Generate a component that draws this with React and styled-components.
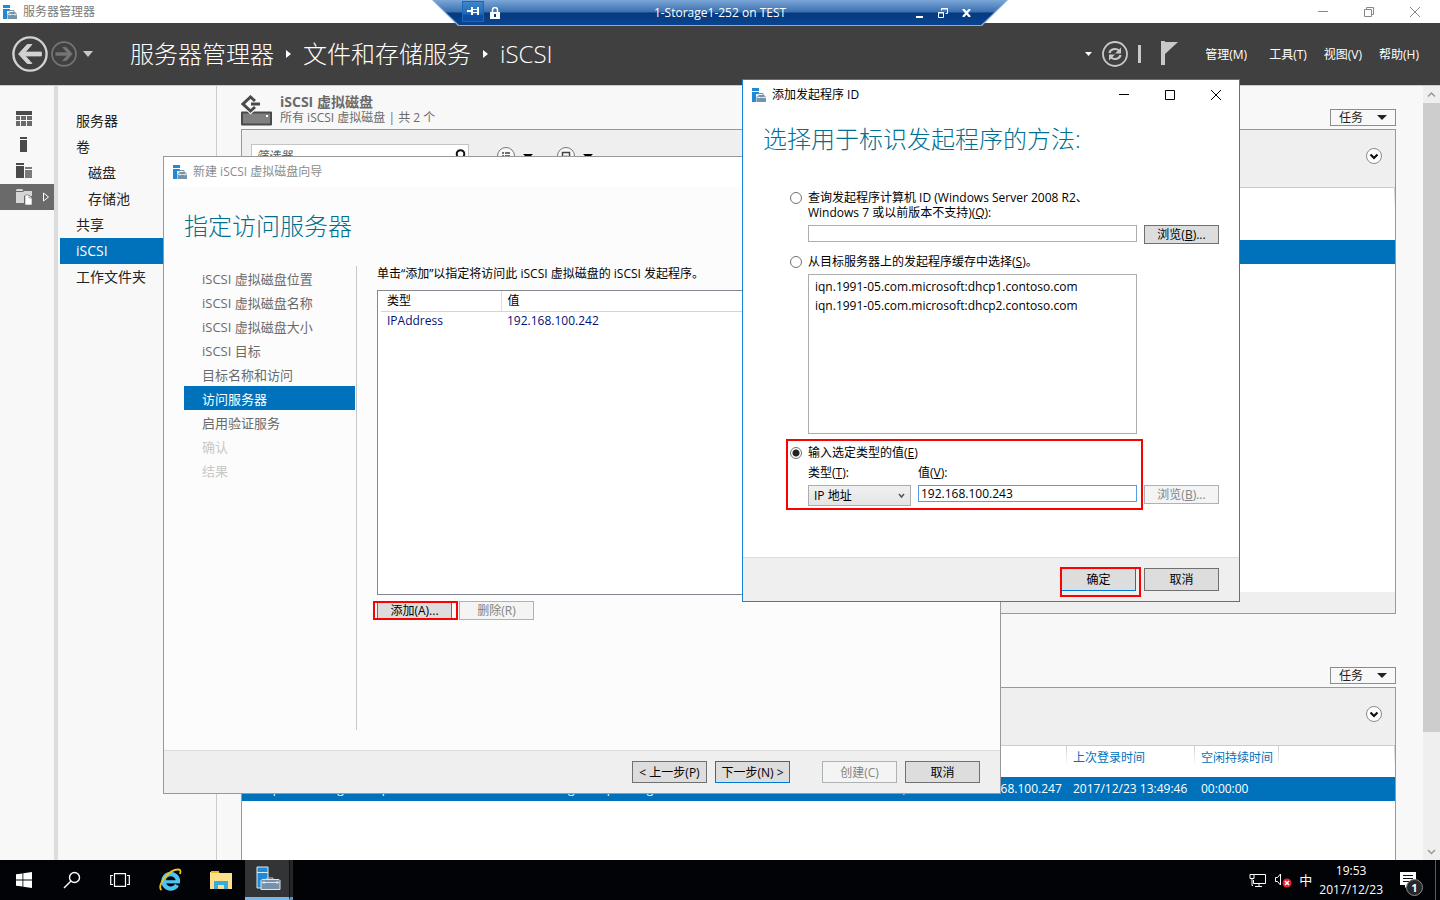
import React from "react";
import styled, { createGlobalStyle } from "styled-components";

const GlobalStyle = createGlobalStyle`
  *, *::before, *::after {
    box-sizing: border-box;
  }
  body {
    margin: 0;
    background: #000;
    font-family: "Open Sans", "Noto Sans CJK SC", sans-serif;
    font-size: 12px;
    line-height: 16px;
    color: #000;
  }
  button, input, select {
    font: inherit;
    color: inherit;
    margin: 0;
  }
  ul, h1, h2, p {
    margin: 0;
    padding: 0;
    list-style: none;
    font-weight: normal;
  }
  a {
    color: inherit;
    text-decoration: none;
  }
  svg {
    display: block;
    flex: none;
  }
`;

const Desktop = styled.div`
  position: relative;
  height: 100vh;
  overflow: hidden;
  display: flex;
  flex-direction: column;
`;

/* ---- server manager window ---- */

const Manager = styled.div`
  flex: 1;
  min-height: 0;
  display: flex;
  flex-direction: column;
  background: #f8f8f8;
`;
const ManagerTitle = styled.div`
  height: 23px;
  display: flex;
  align-items: center;
  gap: 6px;
  padding: 0 19px 0 3px;
  background: #fff;
  color: #7a7a7a;
`;
const Spacer = styled.div`
  flex: 1;
`;
const WindowButtons = styled.div`
  display: flex;
  gap: 34px;
`;
const PlainButton = styled.button`
  display: flex;
  align-items: center;
  justify-content: center;
  padding: 0;
  border: none;
  background: none;
`;
const Header = styled.div`
  height: 62px;
  display: flex;
  align-items: center;
  padding: 0 21px 0 12px;
  background: #404040;
  color: #fff;
`;
const History = styled.div`
  display: flex;
  gap: 3px;
  button:last-child {
    margin-left: 3px;
  }
`;
const Crumbs = styled.nav`
  display: flex;
  align-items: center;
  gap: 11px;
  margin-left: 37px;
  font-size: 24px;
  font-weight: 300;
  line-height: 32px;
`;
const HeaderTools = styled.div`
  display: flex;
  align-items: center;
  gap: 10px;
  margin-right: 26px;
`;
const Menu = styled.nav`
  display: flex;
  gap: 17px;
  padding-top: 2px;
`;
const MenuButton = styled(PlainButton)`
  &:first-child {
    margin-right: 5px;
  }
`;
const ManagerBody = styled.div`
  flex: 1;
  min-height: 0;
  display: flex;
  border-top: 1px solid #ccc;
`;
const Rail = styled.div`
  width: 58px;
  padding-top: 20px;
  border-right: 4px solid #dcdcdc;
`;
const RailButton = styled(PlainButton)`
  width: 100%;
  height: 26px;
  justify-content: flex-start;
  gap: 10px;
  padding-left: 16px;
  background: ${(props) => (props.$active ? "#6a6a6a" : "none")};
`;
const Side = styled.ul`
  width: 159px;
  padding: 22px 0 0 2px;
  border-right: 1px solid #ccc;
  font-size: 14px;
`;
const SideLink = styled.a`
  display: block;
  line-height: 26px;
  padding-left: ${(props) => (props.$nested ? 28 : 16)}px;
  color: ${(props) => (props.$active ? "#fff" : "#222")};
  background: ${(props) => (props.$active ? "#0072bc" : "none")};
`;
const Content = styled.main`
  flex: 1;
  min-width: 0;
  display: flex;
  flex-direction: column;
  padding: 8px 27px 0 24px;
`;
const SectionHead = styled.div`
  display: flex;
  align-items: flex-end;
  gap: 8px;
  height: 35px;
  padding-bottom: 3px;
  color: #6a6a6a;
`;
const SectionTitle = styled.h2`
  font-size: 14px;
  font-weight: bold;
  line-height: 17px;
`;
const TasksButton = styled(PlainButton)`
  width: 66px;
  height: 17px;
  gap: 14px;
  border: 1px solid #8c8c8c;
  color: #222;
  line-height: 15px;
`;
const Panel = styled.section`
  display: flex;
  flex-direction: column;
  height: ${(props) => (props.$open ? "auto" : "485px")};
  flex: ${(props) => (props.$open ? "1" : "none")};
  min-height: 0;
  margin-bottom: ${(props) => (props.$open ? 0 : 38)}px;
  border: 1px solid #999;
  border-bottom-width: ${(props) => (props.$open ? 0 : 1)}px;
  background: #fff;
`;
const PanelTools = styled.div`
  display: flex;
  align-items: center;
  height: 58px;
  flex: none;
  padding: 0 13px 5px 9px;
  background: #efefef;
  border-bottom: 1px solid #ccc;
`;
const Filter = styled.label`
  display: flex;
  align-items: center;
  width: 218px;
  height: 24px;
  margin-right: 28px;
  padding: 0 2px 0 4px;
  background: #fff;
  border: 1px solid #c4c4c4;
`;
const FilterInput = styled.input`
  flex: 1;
  min-width: 0;
  padding: 0;
  border: none;
  outline: none;
  background: none;
  &::placeholder {
    color: #555;
    font-style: italic;
    opacity: 1;
  }
`;
const ToolGroup = styled.div`
  display: flex;
  align-items: center;
  gap: 8px;
  margin-right: 24px;
`;
const PanelFoot = styled.div`
  height: 21px;
  margin-top: auto;
  background: #efefef;
`;
const Grid = styled.table`
  width: 100%;
  table-layout: fixed;
  border-collapse: collapse;
  th,
  td {
    padding: 0 0 0 6px;
    text-align: left;
    font-weight: normal;
    white-space: nowrap;
    overflow: hidden;
  }
  th {
    height: 31px;
    padding-bottom: 8px;
    color: #0072bc;
    background: linear-gradient(#ccc, #fff 20px) right top / 1px 20px no-repeat;
  }
  td {
    height: 24px;
  }
`;
const GroupRow = styled.tr`
  td {
    height: 21px;
  }
`;
const PickedRow = styled.tr`
  background: #0072bc;
  color: #fff;
`;
const ScrollTrack = styled.div`
  width: 17px;
  display: flex;
  flex-direction: column;
  background: #efefef;
`;
const ScrollThumb = styled.div`
  flex: 1;
  margin-bottom: 111px;
  background: #cdcdcd;
`;

/* ---- remote session bar ---- */

const SessionBar = styled.div`
  position: absolute;
  top: 0;
  left: 50%;
  width: 576px;
  height: 26px;
  margin-left: -288px;
  background: #86aedb;
  clip-path: polygon(0 0, 100% 0, 550px 100%, 26px 100%);
`;
const SessionFill = styled.div`
  display: grid;
  grid-template-columns: 1fr auto 1fr;
  align-items: center;
  height: 25px;
  padding: 0 30px;
  color: #fff;
  background: linear-gradient(#7ba6d6, #3a70b0 12px, #06397f 13px, #0a4490);
  clip-path: polygon(1px 0, 575px 0, 549px 100%, 27px 100%);
`;
const SessionTools = styled.div`
  display: flex;
  align-items: center;
  justify-content: ${(props) => (props.$end ? "flex-end" : "flex-start")};
  gap: ${(props) => (props.$end ? 14 : 6)}px;
  padding-right: ${(props) => (props.$end ? 7 : 0)}px;
`;
const PinButton = styled(PlainButton)`
  width: 22px;
  height: 21px;
  margin-bottom: 3px;
  background: linear-gradient(#3f86c8, #2468b4 12px, #0a4fa5 13px);
  border: 1px solid #1868bd;
`;

/* ---- dialogs ---- */

const Dialog = styled.section`
  position: absolute;
  display: flex;
  flex-direction: column;
`;
const WizardFrame = styled(Dialog)`
  left: 163px;
  top: 156px;
  width: 838px;
  height: 638px;
  background: #fcfcfc;
  border: 1px solid #999;
`;
const InitiatorFrame = styled(Dialog)`
  left: 742px;
  top: 79px;
  width: 498px;
  height: 523px;
  background: #fff;
  border: 1px solid #1883d7;
`;
const DialogTitle = styled.div`
  display: flex;
  align-items: center;
  gap: 6px;
  height: 30px;
  flex: none;
  padding: 0 17px 0 9px;
  background: #fff;
  color: ${(props) => (props.$muted ? "#8c8c8c" : "#000")};
`;
const DialogHeading = styled.h1`
  padding: ${(props) => props.$top}px 20px 0;
  font-size: 24px;
  font-weight: 300;
  line-height: 32px;
  color: #00708f;
`;
const WizardBody = styled.div`
  flex: 1;
  display: flex;
  padding: 24px 20px 20px;
`;
const Steps = styled.ul`
  width: 173px;
  padding-right: 1px;
  border-right: 1px solid #c8c8c8;
  font-size: 13px;
`;
const Step = styled.li`
  line-height: 22px;
  padding: 2px 0 0 18px;
  color: ${(props) =>
    props.$active ? "#fff" : props.$disabled ? "#c8c8c8" : "#6a6a6a"};
  background: ${(props) => (props.$active ? "#0072bc" : "none")};
`;
const WizardMain = styled.div`
  flex: 1;
  display: flex;
  flex-direction: column;
  padding-left: 20px;
`;
const ListBox = styled.div`
  height: 305px;
  margin: 8px 0 6px;
  padding: 0 3px;
  background: #fff;
  border: 1px solid #828790;
`;
const ServerTable = styled.table`
  width: 100%;
  table-layout: fixed;
  border-collapse: collapse;
  th,
  td {
    height: 20px;
    padding: 0 6px;
    text-align: left;
    font-weight: normal;
  }
  th {
    padding: 2px 6px 1px;
    border-bottom: 1px solid #d5d5d5;
  }
  th:first-child {
    width: 120px;
    border-right: 1px solid #dedede;
  }
  td {
    color: #00127a;
  }
`;
const ButtonRow = styled.div`
  display: flex;
  gap: 7px;
`;
const DialogFoot = styled.div`
  display: flex;
  justify-content: flex-end;
  flex: none;
  gap: 8px;
  padding: 10px 20px;
  background: #efefef;
  border-top: 1px solid #dcdcdc;
`;
const FootGap = styled.span`
  width: 16px;
`;
const Button = styled.button`
  width: 75px;
  height: ${(props) => props.$height || 19}px;
  padding: 0;
  white-space: nowrap;
  line-height: 15px;
  background: #ddd;
  border: 1px solid ${(props) => (props.$primary ? "#0078d7" : "#707070")};
  &:disabled {
    color: #838383;
    background: #f4f4f4;
    border-color: #adb2b5;
  }
`;
const Marked = styled.div`
  position: relative;
`;
const Mark = styled.span`
  position: absolute;
  inset: ${(props) => props.$inset};
  border: 2px solid #f00;
  pointer-events: none;
`;
const Form = styled.form`
  flex: 1;
  display: grid;
  grid-template-columns: 11px 329px 75px;
  column-gap: 7px;
  align-content: start;
  padding: 35px 20px 0 47px;
`;
const Option = styled.label`
  grid-column: 2 / -1;
  line-height: 15px;
  white-space: nowrap;
  padding-bottom: ${(props) => props.$gap || 0}px;
`;
const Radio = styled.input`
  appearance: none;
  width: 12px;
  height: 12px;
  margin: 2px 0 0;
  border: 1px solid #707070;
  border-radius: 50%;
  background: #fff;
  &:checked {
    background: radial-gradient(circle, #222 3px, #fff 4px);
  }
`;
const Field = styled.input`
  grid-column: ${(props) => (props.$wide ? "2" : "auto")};
  width: 100%;
  height: 17px;
  padding: 0 2px;
  outline: none;
  border: 1px solid ${(props) => (props.$focused ? "#569de5" : "#abadb3")};
  background: #fff;
`;
const BrowseButton = styled(Button)`
  margin-bottom: 10px;
`;
const CacheList = styled.ul`
  grid-column: 2 / 3;
  height: 160px;
  margin-bottom: 5px;
  padding: 2px 6px;
  border: 1px solid #abadb3;
  line-height: 19px;
`;
const ValueGroup = styled(Marked)`
  grid-column: 1 / 3;
  display: grid;
  grid-template-columns: 11px 103px 1fr;
  column-gap: 7px;
  padding-top: 6px;
`;
const ValueLabel = styled.label`
  grid-column: ${(props) => props.$col};
  line-height: 15px;
  padding: 5px 0;
`;
const TypeSelect = styled.select`
  height: 21px;
  padding: 0 5px;
  appearance: none;
  border: 1px solid #acacac;
  border-radius: 0;
  background: linear-gradient(#f0f0f0, #e5e5e5);
`;
const SelectWrap = styled.div`
  grid-column: 2;
  display: grid;
  svg {
    grid-area: 1 / 1;
    place-self: center end;
    margin-right: 6px;
    pointer-events: none;
  }
  select {
    grid-area: 1 / 1;
  }
`;
const BottomButton = styled(Button)`
  align-self: end;
  margin-bottom: 2px;
`;

/* ---- taskbar ---- */

const Taskbar = styled.footer`
  height: 40px;
  display: flex;
  align-items: stretch;
  background: #010306;
  color: #fff;
`;
const TaskButton = styled(PlainButton)`
  width: ${(props) => props.$width || 48}px;
`;
const ActiveTask = styled(TaskButton)`
  padding: 0 0 0 3px;
  background: #333436;
  border-bottom: 3px solid #76b9ed;
`;
const TaskStack = styled.span`
  width: 4px;
  background: #252628;
  border-left: 1px solid #111;
  border-bottom: 3px solid #5e93bd;
`;
const Tray = styled.div`
  display: flex;
  align-items: center;
  gap: 7px;
  margin-left: auto;
`;
const Ime = styled.span`
  font-size: 13px;
`;
const Clock = styled.time`
  text-align: center;
  line-height: 19px;
  margin-right: 10px;
`;
const Notices = styled.div`
  position: relative;
  width: 28px;
`;
const Badge = styled.span`
  position: absolute;
  left: 6px;
  top: 7px;
  width: 17px;
  height: 17px;
  border: 1px solid #8a8a8a;
  border-radius: 50%;
  background: #26282b;
  font-size: 11px;
  font-weight: bold;
  line-height: 15px;
  text-align: center;
`;
const PeekEdge = styled.span`
  width: 5px;
  align-self: stretch;
  border-left: 1px solid #5a5a5a;
`;

const ServerIcon = () => (
  <svg width="14" height="14" viewBox="0 0 14 14">
    <path d="M0 0h7v3H0zM0 4h7v2H4v8H0z" fill="#1f8bd8" />
    <path d="M6 6.500V5.500h5v2" fill="none" stroke="#7293aa" />
    <path d="M4.500 9L7 7h5l2 2v5H4.500z" fill="#7293aa" />
    <path d="M5 9.500h9M7 8.500v2M12 8.500v2" stroke="#e8eff3" strokeWidth=".8" />
  </svg>
);

const BigServerIcon = () => (
  <svg width="25" height="25" viewBox="0 0 25 25">
    <path d="M1 1h11v21H1z" fill="#1f8bd8" stroke="#d8ecfa" />
    <path d="M1 6.500h11" stroke="#d8ecfa" />
    <path d="M11 14v-2h6v2" fill="none" stroke="#b9cad8" />
    <path d="M5 14.500l1-1h17l1 1v9H5z" fill="#7891aa" stroke="#dbe5ed" />
    <path d="M6 16.500h17M8 15v3M21 15v3" stroke="#dbe5ed" />
  </svg>
);

const Triangle = ({ w = 10, h = 5, color = "#222" }) => (
  <svg width={w} height={h} viewBox="0 0 10 5" preserveAspectRatio="none">
    <path d="M0 0h10L5 5z" fill={color} />
  </svg>
);

const CrumbArrow = () => (
  <svg width="7" height="8" viewBox="0 0 7 8">
    <path d="M1 0l5 4-5 4z" fill="#fff" />
  </svg>
);

const RoundArrow = ({ r, color, flip }) => (
  <svg width={r * 2} height={r * 2} viewBox="0 0 38 38">
    <circle cx="19" cy="19" r="17.500" fill="none" stroke={color} strokeWidth="2.500" />
    <path
      d="M31 17v4H14l7 8h-5l-9-10 9-10h5l-7 8z"
      fill={color}
      stroke={color}
      transform={flip ? "rotate(180 19 19)" : undefined}
    />
  </svg>
);

const WinIcon = ({ kind, color = "#000" }) => (
  <svg width="12" height="12" viewBox="0 0 12 12" fill="none" stroke={color}>
    {kind === "min" && <path d="M1 5.500h10" />}
    {kind === "max" && <path d="M1.500 1.500h9v9h-9z" />}
    {kind === "restore" && <path d="M1.500 3.500h7v7h-7zM3.500 3.500v-2h7v7h-2" />}
    {kind === "close" && <path d="M1 1l10 10M11 1L1 11" />}
  </svg>
);

const ExpandIcon = () => (
  <svg width="16" height="16" viewBox="0 0 16 16">
    <circle cx="8" cy="8" r="7.500" fill="#fff" stroke="#8a8a8a" />
    <path d="M4.500 6.500L8 10l3.500-3.500" fill="none" stroke="#111" strokeWidth="2.200" />
  </svg>
);

const SmallChevron = ({ up }) => (
  <svg width="17" height="17" viewBox="0 0 17 17">
    <path
      d={up ? "M5 10.500l3.500-3.500 3.500 3.500" : "M5 7l3.500 3.500L12 7"}
      fill="none"
      stroke="#999"
      strokeWidth="1.500"
    />
  </svg>
);

const rail = [
  <g key="a">
    <path d="M0 0h16v4H0z" fill="#4a4a4a" />
    <path d="M0 5h4v4H0zM0 10h4v5H0zM5 5h5v4H5zM5 10h5v5H5zM11 5h5v4h-5zM11 10h5v5h-5z" fill="#6a6a6a" />
  </g>,
  <path key="b" d="M4 0h7v2H4zM4 3h7v12H4z" fill="#4a4a4a" />,
  <g key="c">
    <path d="M0 0h8v2H0zM0 3h8v12H0z" fill="#4a4a4a" />
    <path d="M9 4h7v2H9zM9 7h7v8H9z" fill="#7a7a7a" />
  </g>,
  <g key="d">
    <path d="M0 1l1-1h5l1 1v1H0zM0 3h7l1-1h8v5H8v7H0z" fill="#d6d6d6" />
    <path d="M9 6h4l3 3v7H9z" fill="#fff" stroke="#6a6a6a" strokeWidth=".6" />
    <path d="M13 6v3h3" fill="none" stroke="#6a6a6a" strokeWidth=".6" />
  </g>,
];

const nav = [
  { text: "服务器" },
  { text: "卷" },
  { text: "磁盘", nested: true },
  { text: "存储池", nested: true },
  { text: "共享" },
  { text: "iSCSI", active: true },
  { text: "工作文件夹" },
];

const steps = [
  "iSCSI 虚拟磁盘位置",
  "iSCSI 虚拟磁盘名称",
  "iSCSI 虚拟磁盘大小",
  "iSCSI 目标",
  "目标名称和访问",
  "访问服务器",
  "启用验证服务",
  "确认",
  "结果",
];

const Tasks = () => (
  <TasksButton type="button">
    任务
    <Triangle />
  </TasksButton>
);

const ServerManager = () => (
  <Manager>
    <ManagerTitle>
      <ServerIcon />
      服务器管理器
      <Spacer />
      <WindowButtons>
        <PlainButton aria-label="最小化"><WinIcon kind="min" color="#888" /></PlainButton>
        <PlainButton aria-label="还原"><WinIcon kind="restore" color="#888" /></PlainButton>
        <PlainButton aria-label="关闭"><WinIcon kind="close" color="#888" /></PlainButton>
      </WindowButtons>
    </ManagerTitle>
    <Header>
      <History>
        <PlainButton aria-label="后退"><RoundArrow r={18} color="#d2d2d2" /></PlainButton>
        <PlainButton aria-label="前进"><RoundArrow r={13} color="#757575" flip /></PlainButton>
        <PlainButton aria-label="历史记录"><Triangle w={10} h={6} color="#c8c8c8" /></PlainButton>
      </History>
      <Crumbs>
        <a href="#manager">服务器管理器</a>
        <CrumbArrow />
        <a href="#storage">文件和存储服务</a>
        <CrumbArrow />
        <a href="#iscsi">iSCSI</a>
      </Crumbs>
      <Spacer />
      <HeaderTools>
        <Triangle w={7} h={4} color="#fff" />
        <PlainButton aria-label="刷新">
          <svg width="26" height="26" viewBox="0 0 26 26" fill="none" stroke="#c8c8c8">
            <circle cx="13" cy="13" r="12" strokeWidth="1.800" />
            <path d="M7.500 12c.5-3.500 6-5.500 9.500-2.500M18.500 14c-.5 3.500-6 5.500-9.500 2.500" strokeWidth="2.200" />
            <path d="M19 6.500v6h-6zM7 19.500v-6h6z" fill="#c8c8c8" stroke="none" />
          </svg>
        </PlainButton>
        <svg width="3" height="18"><path d="M0 0h3v18H0z" fill="#c8c8c8" /></svg>
        <PlainButton aria-label="通知">
          <svg width="28" height="28" viewBox="0 0 28 28">
            <path d="M10 1h4v24h-4zM14 2h13L14 14z" fill="#c8c8c8" />
          </svg>
        </PlainButton>
      </HeaderTools>
      <Menu>
        <MenuButton>管理(M)</MenuButton>
        <MenuButton>工具(T)</MenuButton>
        <MenuButton>视图(V)</MenuButton>
        <MenuButton>帮助(H)</MenuButton>
      </Menu>
    </Header>
    <ManagerBody>
      <Rail>
        {rail.map((icon, i) => (
          <RailButton key={i} $active={i === 3} aria-label={"导航 " + (i + 1)}>
            <svg width="16" height="16" viewBox="0 0 16 16">{icon}</svg>
            {i === 3 && (
              <svg width="8" height="10" viewBox="0 0 8 10">
                <path d="M1.500 1l5 4-5 4z" fill="none" stroke="#fff" />
              </svg>
            )}
          </RailButton>
        ))}
      </Rail>
      <Side>
        {nav.map((item) => (
          <li key={item.text}>
            <SideLink href="#nav" $nested={item.nested} $active={item.active}>
              {item.text}
            </SideLink>
          </li>
        ))}
      </Side>
      <Content>
        <SectionHead>
          <svg width="31" height="31" viewBox="0 0 31 31">
            <path d="M1 17.500h29v12H1z" fill="#808080" stroke="#4a4a4a" strokeWidth="2" strokeLinejoin="round" />
            <path d="M25 20h2v2h-2z" fill="#fff" />
            <path d="M14 6l-4.500-4L2 9l7.500 7 4.500-4" fill="none" stroke="#f8f8f8" strokeWidth="5" />
            <path d="M14 6l-4.500-4L2 9l7.500 7 4.500-4M10 9h9" fill="none" stroke="#4a4a4a" strokeWidth="3" />
          </svg>
          <div>
            <SectionTitle>iSCSI 虚拟磁盘</SectionTitle>
            <p>所有 iSCSI 虚拟磁盘 | 共 2 个</p>
          </div>
          <Spacer />
          <Tasks />
        </SectionHead>
        <Panel>
          <PanelTools>
            <Filter>
              <FilterInput placeholder="筛选器" aria-label="筛选器" />
              <svg width="12" height="14" viewBox="0 0 12 14" fill="none" stroke="#111" strokeWidth="2">
                <circle cx="6.500" cy="5" r="3.800" />
                <path d="M4 8l-3 5" />
              </svg>
            </Filter>
            <ToolGroup>
              <svg width="18" height="18" viewBox="0 0 18 18">
                <circle cx="9" cy="9" r="8.500" fill="#f8f8f8" stroke="#777" />
                <path d="M5 6h2M8 6h5M5 9h2M8 9h5M5 12h2M8 12h5" stroke="#444" strokeWidth="1.500" />
              </svg>
              <Triangle color="#000" />
            </ToolGroup>
            <ToolGroup>
              <svg width="18" height="18" viewBox="0 0 18 18">
                <circle cx="9" cy="9" r="8.500" fill="#f8f8f8" stroke="#777" />
                <path d="M5.500 5.500h7v7h-7zM7 9.500h4" fill="none" stroke="#444" strokeWidth="1.500" />
              </svg>
              <Triangle color="#000" />
            </ToolGroup>
            <Spacer />
            <PlainButton aria-label="展开"><ExpandIcon /></PlainButton>
          </PanelTools>
          <Grid>
            <tbody>
              <tr><th aria-label="路径" /></tr>
              <GroupRow><td /></GroupRow>
              <PickedRow><td /></PickedRow>
            </tbody>
          </Grid>
          <PanelFoot />
        </Panel>
        <SectionHead>
          <Spacer />
          <Tasks />
        </SectionHead>
        <Panel $open>
          <PanelTools>
            <Spacer />
            <PlainButton aria-label="展开"><ExpandIcon /></PlainButton>
          </PanelTools>
          <Grid>
            <colgroup>
              <col width="228" />
              <col width="215" />
              <col width="120" />
              <col width="159" />
              <col width="103" />
              <col width="128" />
              <col width="84" />
              <col />
            </colgroup>
            <thead>
              <tr>
                <th>名称</th>
                <th>发起程序</th>
                <th>目标状态</th>
                <th>IP 地址</th>
                <th />
                <th>上次登录时间</th>
                <th>空闲持续时间</th>
                <th />
              </tr>
            </thead>
            <tbody>
              <PickedRow>
                <td>test-p-windows-g-hosts-p</td>
                <td>windows-server-g-host-p-data-g</td>
                <td>已连接</td>
                <td>192.168.100.247,</td>
                <td>192.168.100.247</td>
                <td>2017/12/23 13:49:46</td>
                <td>00:00:00</td>
                <td />
              </PickedRow>
            </tbody>
          </Grid>
        </Panel>
      </Content>
      <ScrollTrack>
        <SmallChevron up />
        <ScrollThumb />
        <SmallChevron />
      </ScrollTrack>
    </ManagerBody>
  </Manager>
);

const Session = () => (
  <SessionBar>
    <SessionFill>
      <SessionTools>
        <PinButton aria-label="固定">
          <svg width="12" height="10" viewBox="0 0 12 10" stroke="#fff" fill="none">
            <path d="M0 5h5M5 1v8" strokeWidth="2" />
            <path d="M5 3.500h6M5 6.500h6" strokeWidth="1" />
            <path d="M11 1v8" strokeWidth="2" />
          </svg>
        </PinButton>
        <svg width="10" height="12" viewBox="0 0 10 12">
          <path d="M2.500 5V3a2.500 2.500 0 015 0v2" fill="none" stroke="#fff" strokeWidth="1.500" />
          <path d="M0 5h10v7H0z" fill="#fff" />
          <path d="M4 7h2v3H4z" fill="#06397f" />
        </svg>
      </SessionTools>
      <span>1-Storage1-252 on TEST</span>
      <SessionTools $end>
        <PlainButton aria-label="最小化">
          <svg width="8" height="10"><path d="M0 8h7v2H0z" fill="#fff" /></svg>
        </PlainButton>
        <PlainButton aria-label="还原">
          <svg width="10" height="10" viewBox="0 0 10 10" fill="none" stroke="#fff">
            <path d="M.5 4.500h5v5h-5zM0 5h6M3.500 2.500v-2h6v5h-2M3 1h7" />
          </svg>
        </PlainButton>
        <PlainButton aria-label="关闭">
          <svg width="9" height="8" viewBox="0 0 9 8">
            <path d="M1 0l7 8M8 0L1 8" stroke="#fff" strokeWidth="2.200" />
          </svg>
        </PlainButton>
      </SessionTools>
    </SessionFill>
  </SessionBar>
);

const Wizard = () => (
  <WizardFrame>
    <DialogTitle $muted>
      <ServerIcon />
      新建 iSCSI 虚拟磁盘向导
    </DialogTitle>
    <DialogHeading $top={23}>指定访问服务器</DialogHeading>
    <WizardBody>
      <Steps>
        {steps.map((step, i) => (
          <Step key={step} $active={i === 5} $disabled={i > 6}>{step}</Step>
        ))}
      </Steps>
      <WizardMain>
        <p>单击“添加”以指定将访问此 iSCSI 虚拟磁盘的 iSCSI 发起程序。</p>
        <ListBox>
          <ServerTable>
            <thead>
              <tr><th>类型</th><th>值</th></tr>
            </thead>
            <tbody>
              <tr><td>IPAddress</td><td>192.168.100.242</td></tr>
            </tbody>
          </ServerTable>
        </ListBox>
        <ButtonRow>
          <Marked>
            <Button>添加(A)...</Button>
            <Mark $inset="0 -6px 0 -4px" />
          </Marked>
          <Button disabled>删除(R)</Button>
        </ButtonRow>
      </WizardMain>
    </WizardBody>
    <DialogFoot>
      <Button $height={22}>&lt; 上一步(P)</Button>
      <Button $height={22} $primary>下一步(N) &gt;</Button>
      <FootGap />
      <Button $height={22} disabled>创建(C)</Button>
      <Button $height={22}>取消</Button>
    </DialogFoot>
  </WizardFrame>
);

const InitiatorDialog = () => (
  <InitiatorFrame>
    <DialogTitle>
      <ServerIcon />
      添加发起程序 ID
      <Spacer />
      <WindowButtons>
        <PlainButton aria-label="最小化"><WinIcon kind="min" /></PlainButton>
        <PlainButton aria-label="最大化"><WinIcon kind="max" /></PlainButton>
        <PlainButton aria-label="关闭"><WinIcon kind="close" /></PlainButton>
      </WindowButtons>
    </DialogTitle>
    <DialogHeading $top={13}>选择用于标识发起程序的方法:</DialogHeading>
    <Form id="initiator">
      <Radio type="radio" name="method" id="query" />
      <Option htmlFor="query" $gap={5}>
        查询发起程序计算机 ID (Windows Server 2008 R2、
        <br />
        Windows 7 或以前版本不支持)(<u>Q</u>):
      </Option>
      <Field $wide aria-label="计算机 ID" />
      <BrowseButton type="button">浏览(<u>B</u>)...</BrowseButton>
      <Radio type="radio" name="method" id="cache" />
      <Option htmlFor="cache" $gap={5}>从目标服务器上的发起程序缓存中选择(<u>S</u>)。</Option>
      <CacheList>
        <li>iqn.1991-05.com.microsoft:dhcp1.contoso.com</li>
        <li>iqn.1991-05.com.microsoft:dhcp2.contoso.com</li>
      </CacheList>
      <ValueGroup>
        <Radio type="radio" name="method" id="value" defaultChecked />
        <Option htmlFor="value">输入选定类型的值(<u>E</u>)</Option>
        <ValueLabel $col="2" htmlFor="type">类型(<u>T</u>):</ValueLabel>
        <ValueLabel $col="3" htmlFor="ip">值(<u>V</u>):</ValueLabel>
        <SelectWrap>
          <TypeSelect id="type">
            <option>IP 地址</option>
          </TypeSelect>
          <svg width="7" height="6" viewBox="0 0 7 6">
            <path d="M1 1l2.500 3L6 1" fill="none" stroke="#555" strokeWidth="1.500" />
          </svg>
        </SelectWrap>
        <Field id="ip" defaultValue="192.168.100.243" $focused />
        <Mark $inset="0 -6px -4px -4px" />
      </ValueGroup>
      <BottomButton type="button" disabled>浏览(<u>B</u>)...</BottomButton>
    </Form>
    <DialogFoot>
      <Marked>
        <Button form="initiator" type="button" $height={23} $primary>确定</Button>
        <Mark $inset="-1px -5px -6px -1px" />
      </Marked>
      <Button $height={23}>取消</Button>
    </DialogFoot>
  </InitiatorFrame>
);

const Bar = () => (
  <Taskbar>
    <TaskButton aria-label="开始">
      <svg width="16" height="16" viewBox="0 0 16 16">
        <path d="M0 2.300L6.500 1.400v6.200H0zM7.300 1.300L16 0v7.600H7.300zM0 8.400h6.500v6.200L0 13.700zM7.300 8.400H16V16l-8.700-1.200z" fill="#fff" />
      </svg>
    </TaskButton>
    <TaskButton aria-label="搜索">
      <svg width="18" height="18" viewBox="0 0 18 18" fill="none" stroke="#fff" strokeWidth="1.400">
        <circle cx="11.500" cy="6.500" r="5" />
        <path d="M8 10l-7 7" />
      </svg>
    </TaskButton>
    <TaskButton aria-label="任务视图">
      <svg width="20" height="14" viewBox="0 0 20 14" fill="none" stroke="#fff" strokeWidth="1.200">
        <path d="M4.500 .7h11v12.600h-11zM3 2.500H.7v9H3M17 2.500h2.300v9H17" />
      </svg>
    </TaskButton>
    <TaskButton $width={52} aria-label="Internet Explorer">
      <svg width="24" height="24" viewBox="0 0 24 24" fill="none">
        <path d="M20 13.500A7.300 7.300 0 1019 17" stroke="#4fc4f2" strokeWidth="4.400" />
        <path d="M7 13.800H22" stroke="#4fc4f2" strokeWidth="3.200" />
        <path d="M3.500 22C-2 18 11 1 20.500 1.500c2 .2 2.500 1.800 1.500 4.500" stroke="#f3c11c" strokeWidth="1.800" />
      </svg>
    </TaskButton>
    <TaskButton $width={49} aria-label="文件资源管理器">
      <svg width="22" height="19" viewBox="0 0 22 19">
        <path d="M0 1h8l2 1h12v16H0z" fill="#ffe08a" />
        <path d="M1 0h8v2H1z" fill="#f0b92c" />
        <path d="M4 10h14v8h-4v-4H8v4H4z" fill="#35ace0" />
      </svg>
    </TaskButton>
    <ActiveTask $width={44} aria-label="服务器管理器">
      <BigServerIcon />
    </ActiveTask>
    <TaskStack />
    <Tray>
      <svg width="18" height="15" viewBox="0 0 18 15" fill="none" stroke="#fff">
        <path d="M5 1.500h11.500v9h-12V7M1 1.500h4v4H1zM3 5.500v7h1M10 10.500v3M6 13.500h7" />
      </svg>
      <svg width="18" height="16" viewBox="0 0 18 16">
        <path d="M1.500 5.500h2l3-3.500v11l-3-3.500h-2z" fill="none" stroke="#fff" />
        <circle cx="13" cy="11" r="4.500" fill="#e0202c" />
        <path d="M11 9l4 4M15 9l-4 4" stroke="#fff" strokeWidth="1.500" />
      </svg>
      <Ime>中</Ime>
      <Clock>
        19:53
        <br />
        2017/12/23
      </Clock>
      <Notices>
        <svg width="16" height="16" viewBox="0 0 16 16">
          <path d="M0 0h16v13H8l-3 3v-3H0z" fill="#fff" />
          <path d="M3 3.500h10M3 6.500h10M3 9.500h7" stroke="#111" />
        </svg>
        <Badge>1</Badge>
      </Notices>
      <PeekEdge />
    </Tray>
  </Taskbar>
);

const App = () => {
  return (
    <Desktop>
      <GlobalStyle />
      <ServerManager />
      <Bar />
      <Wizard />
      <InitiatorDialog />
      <Session />
    </Desktop>
  );
};

export default App;
